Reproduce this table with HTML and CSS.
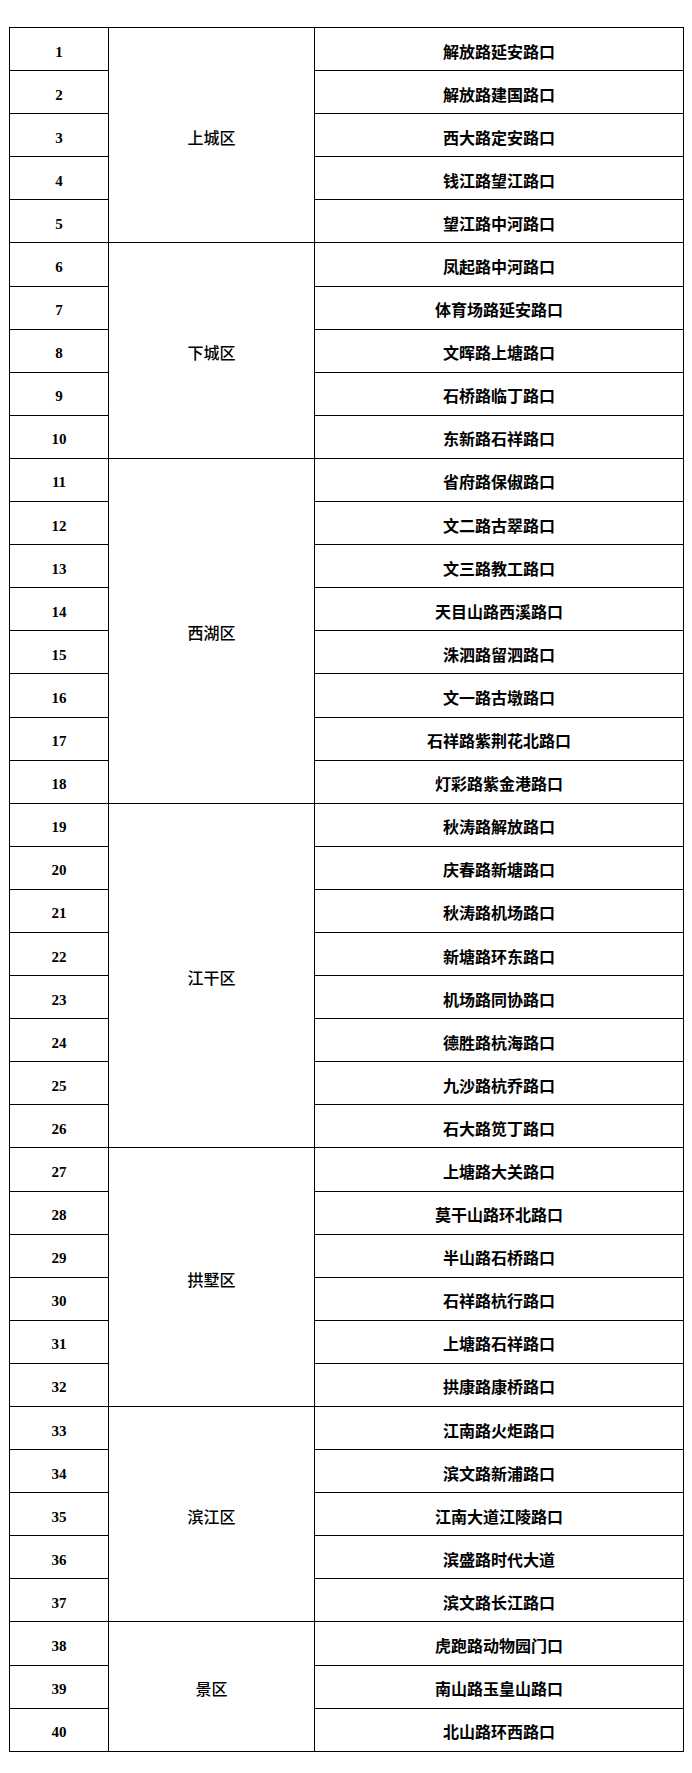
FILE: index.html
```html
<!DOCTYPE html>
<html lang="zh-CN">
<head>
<meta charset="utf-8">
<title>路口列表</title>
<link rel="stylesheet" href="styles.css">
</head>
<body>
<table class="grid">
<colgroup><col class="c-num"><col class="c-dist"><col class="c-road"></colgroup>
<tbody>
<tr><td class="num">1</td><td class="dist" rowspan="5">上城区</td><td class="road">解放路延安路口</td></tr>
<tr><td class="num">2</td><td class="road">解放路建国路口</td></tr>
<tr><td class="num">3</td><td class="road">西大路定安路口</td></tr>
<tr><td class="num">4</td><td class="road">钱江路望江路口</td></tr>
<tr><td class="num">5</td><td class="road">望江路中河路口</td></tr>
<tr><td class="num">6</td><td class="dist" rowspan="5">下城区</td><td class="road">凤起路中河路口</td></tr>
<tr><td class="num">7</td><td class="road">体育场路延安路口</td></tr>
<tr><td class="num">8</td><td class="road">文晖路上塘路口</td></tr>
<tr><td class="num">9</td><td class="road">石桥路临丁路口</td></tr>
<tr><td class="num">10</td><td class="road">东新路石祥路口</td></tr>
<tr><td class="num">11</td><td class="dist" rowspan="8">西湖区</td><td class="road">省府路保俶路口</td></tr>
<tr><td class="num">12</td><td class="road">文二路古翠路口</td></tr>
<tr><td class="num">13</td><td class="road">文三路教工路口</td></tr>
<tr><td class="num">14</td><td class="road">天目山路西溪路口</td></tr>
<tr><td class="num">15</td><td class="road">洙泗路留泗路口</td></tr>
<tr><td class="num">16</td><td class="road">文一路古墩路口</td></tr>
<tr><td class="num">17</td><td class="road">石祥路紫荆花北路口</td></tr>
<tr><td class="num">18</td><td class="road">灯彩路紫金港路口</td></tr>
<tr><td class="num">19</td><td class="dist" rowspan="8">江干区</td><td class="road">秋涛路解放路口</td></tr>
<tr><td class="num">20</td><td class="road">庆春路新塘路口</td></tr>
<tr><td class="num">21</td><td class="road">秋涛路机场路口</td></tr>
<tr><td class="num">22</td><td class="road">新塘路环东路口</td></tr>
<tr><td class="num">23</td><td class="road">机场路同协路口</td></tr>
<tr><td class="num">24</td><td class="road">德胜路杭海路口</td></tr>
<tr><td class="num">25</td><td class="road">九沙路杭乔路口</td></tr>
<tr><td class="num">26</td><td class="road">石大路笕丁路口</td></tr>
<tr><td class="num">27</td><td class="dist" rowspan="6">拱墅区</td><td class="road">上塘路大关路口</td></tr>
<tr><td class="num">28</td><td class="road">莫干山路环北路口</td></tr>
<tr><td class="num">29</td><td class="road">半山路石桥路口</td></tr>
<tr><td class="num">30</td><td class="road">石祥路杭行路口</td></tr>
<tr><td class="num">31</td><td class="road">上塘路石祥路口</td></tr>
<tr><td class="num">32</td><td class="road">拱康路康桥路口</td></tr>
<tr><td class="num">33</td><td class="dist" rowspan="5">滨江区</td><td class="road">江南路火炬路口</td></tr>
<tr><td class="num">34</td><td class="road">滨文路新浦路口</td></tr>
<tr><td class="num">35</td><td class="road">江南大道江陵路口</td></tr>
<tr><td class="num">36</td><td class="road">滨盛路时代大道</td></tr>
<tr><td class="num">37</td><td class="road">滨文路长江路口</td></tr>
<tr><td class="num">38</td><td class="dist" rowspan="3">景区</td><td class="road">虎跑路动物园门口</td></tr>
<tr><td class="num">39</td><td class="road">南山路玉皇山路口</td></tr>
<tr><td class="num">40</td><td class="road">北山路环西路口</td></tr>
</tbody>
</table>
</body>
</html>
```

FILE: styles.css
```css
html, body {
  margin: 0;
  padding: 0;
  background: #ffffff;
}
body {
  padding: 27px 0 0 9px;
  font-family: "Liberation Serif", "Noto Sans CJK SC", serif;
  color: #000000;
}
.grid {
  border-collapse: collapse;
  table-layout: fixed;
  width: 674px;
}
.c-num { width: 99px; }
.c-dist { width: 206px; }
.c-road { width: 369px; }
.grid tr {
  height: 43.1px;
}
.grid td {
  border: 1px solid #000000;
  padding: 3px 0 0 0;
  text-align: center;
  vertical-align: middle;
  line-height: 20px;
}
.grid td.num {
  font-family: "Liberation Serif", serif;
  font-weight: bold;
  font-size: 15px;
  padding-top: 5px;
}
.dist {
  font-family: "Noto Sans CJK SC", sans-serif;
  font-size: 16px;
  font-weight: 500;
}
.road {
  font-family: "Noto Sans CJK SC", sans-serif;
  font-size: 16px;
  font-weight: bold;
}
```
